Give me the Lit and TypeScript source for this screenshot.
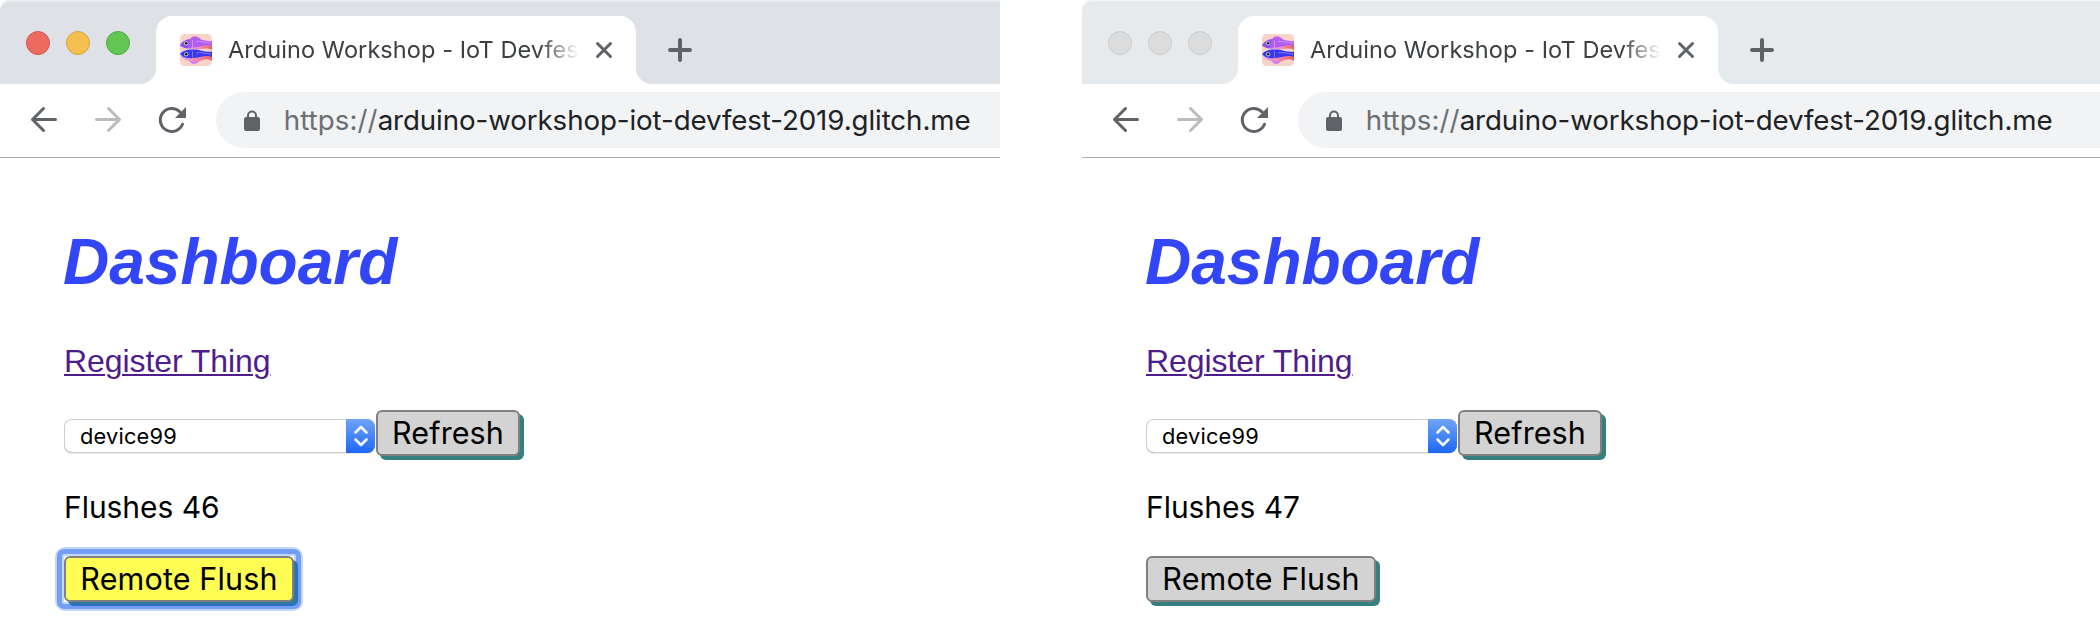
import { LitElement, html, css } from "lit";
import { customElement, property } from "lit/decorators.js";
import { classMap } from "lit/directives/class-map.js";

@customElement("fish-favicon")
export class FishFavicon extends LitElement {
  static styles = css`
    :host { display: block; width: 32px; height: 32px; flex: none; }
    svg { display: block; }
  `;
  render() {
    return html`<svg width="32" height="32" viewBox="0 0 32 32">
      <defs>
        <clipPath id="c"><rect width="32" height="32" rx="4.5" /></clipPath>
        <linearGradient id="belly" x1="0" x2="1" y1="0" y2="0">
          <stop offset="0" stop-color="#d9a0fb" /><stop offset=".45" stop-color="#ee8fb8" /><stop offset="1" stop-color="#f0605c" />
        </linearGradient>
      </defs>
      <g clip-path="url(#c)">
        <rect width="32" height="32" fill="#f8d3c8" />
        <path d="M10 5.500C12 1 18 1.500 21 6Z" fill="#c05df0" />
        <path d="M0 12C3 6 9 4 15 4.500C22 5 26 8 32 7V13C28 12 24 13 20 14.500C13 15.500 6 15 0 12Z" fill="#b05cf5" />
        <path d="M0 11C2 8 5 6 9 5.500C10 9 9 12 7 14.500C4 14 2 13 0 11Z" fill="#8e50ea" />
        <path d="M9 14C12 13.500 16 13.500 20 12.500C25 11 29 11 32 12V16C28 13.500 24 14.500 20 15C16 15.800 12 15.500 9 14Z" fill="url(#belly)" />
        <path d="M12.500 6V14M16 7.500C21 6.500 26 9 31 9" fill="none" stroke="#d79cff" stroke-width=".8" />
        <path d="M9 26C11 31.500 17 31 20 26Z" fill="#d27cf0" />
        <path d="M0 20C4 16 8 15.200 14 15.500C21 15.500 26 19 32 17.500V24C28 22 24 24 20 25C12 26.800 4 25 0 20Z" fill="#3a36f2" />
        <path d="M0 22C8 25 14 24.500 20 23C25 21.500 29 21.500 32 23V27C28 24 24 25.500 20 27C11 28.500 4 26.500 0 22Z" fill="url(#belly)" />
        <path d="M12.500 17V25M16 19C21 17.500 26 20 31 20" fill="none" stroke="#8f86ff" stroke-width=".8" />
        <circle cx="6.200" cy="9.300" r="2.100" fill="#cfe8d8" /><circle cx="6.200" cy="9.300" r="1.300" fill="#111" />
        <circle cx="6.200" cy="20.300" r="2.100" fill="#cfe8d8" /><circle cx="6.200" cy="20.300" r="1.300" fill="#111" />
      </g>
    </svg>`;
  }
}

@customElement("browser-window")
export class BrowserWindow extends LitElement {
  @property({ type: Boolean }) active = false;
  @property({ type: Number }) flushes = 0;

  static styles = css`
    :host { display: block; overflow: hidden; background: #fff; font-family: Inter, Roboto, sans-serif; }
    svg { display: block; flex: none; }
    .strip {
      --strip: #e7eaed;
      display: flex; align-items: flex-end; height: 84px; box-sizing: border-box;
      padding-left: 26px; background: var(--strip); border-top-left-radius: 10px;
      box-shadow: inset 0 1px #f4f5f6, inset 0 2px #ebedf0;
    }
    .strip.active { --strip: #dee1e6; box-shadow: inset 0 1px #eff0f3, inset 0 2px #e4e7eb; }
    .lights { display: flex; gap: 16px; width: 130px; height: 53px; }
    .light {
      width: 24px; height: 24px; box-sizing: border-box; border-radius: 50%;
      background: #dcdcdc; border: 1px solid #cbcccd;
    }
    .active .red { background: #ed6a5f; border-color: #d4564b; }
    .active .yellow { background: #f5bf4f; border-color: #d9a33d; }
    .active .green { background: #61c654; border-color: #4dac40; }
    .tab {
      position: relative; display: flex; align-items: center; width: 480px; height: 68px;
      box-sizing: border-box; padding-left: 24px; background: #fff; border-radius: 16px 16px 0 0;
    }
    .tab::before, .tab::after { content: ""; position: absolute; bottom: 0; width: 16px; height: 16px; }
    .tab::before { left: -16px; background: radial-gradient(circle at 0 0, transparent 15.5px, #fff 16.5px); }
    .tab::after { right: -16px; background: radial-gradient(circle at 100% 0, transparent 15.5px, #fff 16.5px); }
    .title {
      width: 351px; margin: 0 16px 0 16px; overflow: hidden; white-space: nowrap;
      font-size: 23.5px; line-height: 32px; letter-spacing: 0.08px; color: #3c4043;
      -webkit-mask-image: linear-gradient(90deg, #000 312px, transparent 351px);
      mask-image: linear-gradient(90deg, #000 312px, transparent 351px);
    }
    .plus { margin: 0 0 22px 32px; }
    .toolbar {
      display: flex; align-items: flex-start; height: 74px; box-sizing: border-box; padding: 8px 0 0 28px;
      border-bottom: 1px solid #b0b0b2; color: #5f6368;
    }
    .nav { display: flex; align-items: center; gap: 32px; width: 188px; flex: none; margin-top: 11px; }
    .omnibox {
      display: flex; align-items: center; flex: 1; height: 56px; box-sizing: border-box;
      padding-left: 28px; background: #f1f3f4; border-radius: 28px 0 0 28px; white-space: nowrap;
    }
    .url { margin-left: 23.7px; font-size: 27.7px; line-height: 36px; letter-spacing: -0.09px; color: #202124; }
    .scheme { color: #6b6f73; letter-spacing: 0.08px; }
    .page { display: flex; flex-direction: column; align-items: flex-start; padding: 68px 0 0 64px; color: #000; }
    h1 {
      margin: 0 0 0 -1px; font: italic 700 64px/72px "Liberation Sans", Arial, sans-serif; color: #3246f8;
    }
    a {
      margin-top: 45px; font: 32px/36px "Liberation Sans", Arial, sans-serif; letter-spacing: -0.07px;
      color: #4e1c8c; text-decoration: underline; text-decoration-thickness: 2px; text-underline-offset: 2px;
    }
    .controls { display: flex; align-items: flex-start; gap: 1px; margin-top: 31px; }
    .select {
      display: flex; width: 311px; height: 34px; margin-top: 9px; box-sizing: border-box; overflow: hidden;
      border-radius: 8px; box-shadow: inset 0 0 0 1px #cfcfcf, inset 0 -1px #b0b0b0, 0 1px 1px #00000018;
    }
    .value { flex: 1; padding-left: 16px; font-size: 21.8px; line-height: 34px; letter-spacing: 0.2px; }
    .stepper {
      display: flex; align-items: center; justify-content: center; width: 29px;
      background: linear-gradient(#70a5f6, #1c68f5);
    }
    .btn {
      position: relative; height: 46px; box-sizing: border-box; padding: 0 14px; border: 2px solid #808080;
      border-radius: 6px; background: #d3d3d3; box-shadow: 4px 4px #367f80; color: #000;
      font: 30.5px/42px Inter, sans-serif; letter-spacing: 0.1px; white-space: nowrap; text-align: center;
    }
    .refresh { width: 144px; }
    .remote { width: 230px; margin-top: 31px; letter-spacing: 0.15px; }
    .remote.focused { background: #fffd54; }
    .focused::before, .focused::after { content: ""; position: absolute; border-style: solid; }
    .focused::before { inset: -11px; border-width: 9px; border-color: rgba(36, 102, 235, 0.27); border-radius: 10px; }
    .focused::after { inset: -9px; border-width: 5px; border-color: rgba(36, 102, 235, 0.5); border-radius: 7px; }
    .count { margin-top: 33px; font-size: 30px; line-height: 36px; letter-spacing: -0.05px; }
  `;

  render() {
    return html`
      <div class=${classMap({ strip: true, active: this.active })}>
        <div class="lights">
          <span class="light red"></span><span class="light yellow"></span><span class="light green"></span>
        </div>
        <div class="tab">
          <fish-favicon></fish-favicon>
          <div class="title">Arduino Workshop - IoT Devfest</div>
          <svg width="18" height="18" viewBox="0 0 18 18" fill="none" stroke="#5f6368" stroke-width="3" stroke-linecap="round">
            <path d="M2.500 2.500L15.500 15.500M15.500 2.500L2.500 15.500" />
          </svg>
        </div>
        <svg class="plus" width="24" height="24" viewBox="0 0 24 24" fill="none" stroke="#5f6368" stroke-width="4" stroke-linecap="round">
          <path d="M12 2V22M2 12H22" />
        </svg>
      </div>
      <div class="toolbar">
        <div class="nav">
          <svg width="32" height="32" viewBox="0 0 32 32" fill="none" stroke="#5f6368" stroke-width="3" stroke-linecap="round" stroke-linejoin="round">
            <path d="M27.500 16.500H4.500M15.500 5.500L4.500 16.500L15.500 27.500" />
          </svg>
          <svg width="32" height="32" viewBox="0 0 32 32" fill="none" stroke="#babcbe" stroke-width="3" stroke-linecap="round" stroke-linejoin="round">
            <path d="M4.500 16.500H27.500M16.500 5.500L27.500 16.500L16.500 27.500" />
          </svg>
          <svg width="32" height="32" viewBox="0 0 32 32">
            <path d="M24 8.900A11.500 11.500 0 1 0 26.500 21.200" fill="none" stroke="#5f6368" stroke-width="3" stroke-linecap="round" />
            <path d="M30 4V15H19Z" fill="#5f6368" />
          </svg>
        </div>
        <div class="omnibox">
          <svg width="16" height="22" viewBox="0 0 16 22">
            <rect y="8" width="16" height="14" rx="2" fill="#5f6368" />
            <path d="M4 9V6.500A4 4 0 0 1 12 6.500V9" fill="none" stroke="#5f6368" stroke-width="2" />
          </svg>
          <div class="url"><span class="scheme">https://</span>arduino-workshop-iot-devfest-2019.glitch.me</div>
        </div>
      </div>
      <div class="page">
        <h1>Dashboard</h1>
        <a>Register Thing</a>
        <div class="controls">
          <div class="select">
            <span class="value">device99</span>
            <span class="stepper">
              <svg width="14" height="22" viewBox="0 0 14 22" fill="none" stroke="#fff" stroke-width="2.500" stroke-linecap="round" stroke-linejoin="round">
                <path d="M1.500 7.500L7 2L12.500 7.500M1.500 14.500L7 20L12.500 14.500" />
              </svg>
            </span>
          </div>
          <div class="btn refresh">Refresh</div>
        </div>
        <div class="count">Flushes ${this.flushes}</div>
        <div class=${classMap({ btn: true, remote: true, focused: this.active })}>Remote Flush</div>
      </div>
    `;
  }
}

@customElement("app-root")
export class AppRoot extends LitElement {
  static styles = css`
    :host { display: grid; grid-template-columns: 1000px 1018px; column-gap: 82px; height: 630px; background: #fff; overflow: hidden; }
  `;
  render() {
    return html`
      <browser-window active .flushes=${46}></browser-window>
      <browser-window .flushes=${47}></browser-window>
    `;
  }
}
